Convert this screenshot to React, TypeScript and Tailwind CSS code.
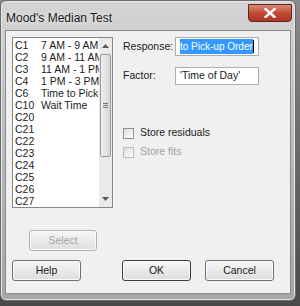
import React from "react";

const rows: [string, string][] = [
  ["C1", "7 AM - 9 AM"],
  ["C2", "9 AM - 11 AM"],
  ["C3", "11 AM - 1 PM"],
  ["C4", "1 PM - 3 PM"],
  ["C6", "Time to Pick-up Order"],
  ["C10", "Wait Time"],
  ["C20", ""],
  ["C21", ""],
  ["C22", ""],
  ["C23", ""],
  ["C24", ""],
  ["C25", ""],
  ["C26", ""],
  ["C27", ""],
];

function Btn({
  label,
  disabled,
  isDefault,
  className,
}: {
  label: string;
  disabled?: boolean;
  isDefault?: boolean;
  className?: string;
}) {
  return (
    <div
      className={
        "flex h-[21px] items-center justify-center rounded-[3px] border bg-gradient-to-b from-[#f6f6f6] to-[#dddddd] shadow-[inset_0_0_0_1px_#fbfbfb] " +
        (disabled
          ? "border-[#adb2b5] text-[#a3a3a3] "
          : isDefault
          ? "border-[#3c3c3c] text-[#1b1b1b] "
          : "border-[#707070] text-[#1b1b1b] ") +
        (className ?? "")
      }
    >
      {label}
    </div>
  );
}

function Checkbox({ label, disabled }: { label: string; disabled?: boolean }) {
  return (
    <div className="flex h-[12px] items-center gap-[6px]">
      <div
        className={
          "h-[11px] w-[11px] border bg-gradient-to-br from-[#dcdcdc] to-white " +
          (disabled ? "border-[#bcbcbc]" : "border-[#8e8f8f]")
        }
      />
      <span className={disabled ? "text-[#a0a0a0]" : "text-[#1b1b1b]"}>{label}</span>
    </div>
  );
}

function ScrollBar() {
  return (
    <div className="flex w-[13px] flex-col bg-[#eaeaea]">
      <div className="flex h-[16px] items-center justify-center">
        <svg width="7" height="4" viewBox="0 0 7 4">
          <path d="M0 4 L3.5 0 L7 4 Z" fill="#5a5a5a" />
        </svg>
      </div>
      <div className="mx-[1px] flex h-[103px] items-center justify-center rounded-[2px] border border-[#9a9a9a] bg-gradient-to-r from-[#f0f0f0] to-[#d6d6d6]">
        <div className="flex flex-col gap-[1px]">
          <div className="h-px w-[5px] bg-[#777]" />
          <div className="h-px w-[5px] bg-[#777]" />
          <div className="h-px w-[5px] bg-[#777]" />
        </div>
      </div>
      <div className="flex-1" />
      <div className="flex h-[16px] items-center justify-center">
        <svg width="7" height="4" viewBox="0 0 7 4">
          <path d="M0 0 L3.5 4 L7 0 Z" fill="#5a5a5a" />
        </svg>
      </div>
    </div>
  );
}

export default function App() {
  return (
    <div
      className="h-[306px] w-[300px] overflow-hidden bg-gradient-to-b from-[#8a8a8a] to-[#4a4a4a] text-[10.5px]"
      style={{ fontFamily: '"Liberation Sans", Arial, sans-serif' }}
    >
      {/* window frame */}
      <div className="flex h-[301px] w-[296px] flex-col rounded-[6px] border border-[#6b6b6b] bg-gradient-to-b from-[#d4d4d4] via-[#bababa] to-[#a6a6a6] shadow-[inset_0_0_0_1px_#e6e6e6]">
        {/* title bar */}
        <div className="flex h-[29px] items-start justify-between pl-[5px] pr-[3px]">
          <span className="mt-[8px] text-[12px] text-[#1a1a1a] [text-shadow:0_0_6px_#ffffff]">
            Mood's Median Test
          </span>
          <div className="mt-[3px] flex h-[18px] w-[44px] items-center justify-center rounded-b-[4px] border border-[#5a2a22] bg-gradient-to-b from-[#d98a76] via-[#c24a36] to-[#ad3624]">
            <svg width="12" height="10" viewBox="0 0 12 10">
              <path
                d="M1.5 1 L10.5 9 M10.5 1 L1.5 9"
                stroke="#ffffff"
                strokeWidth="2.4"
                strokeLinecap="square"
              />
            </svg>
          </div>
        </div>

        {/* client area */}
        <div className="mx-[4px] flex h-[264px] flex-col border border-[#8a8a8a] bg-[#f0f0f0] pl-[6px] pt-[6px]">
          <div className="flex">
            {/* column list */}
            <div className="flex h-[171px] w-[101px] border border-[#828790] bg-white">
              <div className="flex-1 overflow-hidden pl-[2px] pt-[2px] text-[#1b1b1b]">
                {rows.map(([c, name]) => (
                  <div key={c} className="flex h-[12px] items-center whitespace-nowrap">
                    <span className="w-[26px] shrink-0">{c}</span>
                    <span>{name}</span>
                  </div>
                ))}
              </div>
              <ScrollBar />
            </div>

            {/* right side */}
            <div className="ml-[10px] flex flex-col text-[#1b1b1b]">
              <div className="flex h-[19px] items-center">
                <span className="w-[52px]">Response:</span>
                <div className="flex h-[19px] w-[84px] items-center overflow-hidden border border-[#abadb3] bg-white pl-[4px]">
                  <span className="whitespace-nowrap bg-[#3399ff] text-[10px] text-white">
                    to Pick-up Order
                  </span>
                  <span className="h-[13px] w-px shrink-0 bg-black" />
                </div>
              </div>
              <div className="mt-[11px] flex h-[18px] items-center">
                <span className="w-[52px]">Factor:</span>
                <div className="flex h-[18px] w-[84px] items-center border border-[#abadb3] bg-white pl-[4px]">
                  <span className="whitespace-nowrap">'Time of Day'</span>
                </div>
              </div>
              <div className="mt-[42px] flex flex-col gap-[7px]">
                <Checkbox label="Store residuals" />
                <Checkbox label="Store fits" disabled />
              </div>
            </div>
          </div>

          <div className="mt-[22px] pl-[17px]">
            <Btn label="Select" disabled className="w-[68px]" />
          </div>

          <div className="mt-[9px] flex">
            <Btn label="Help" className="w-[69px]" />
            <Btn label="OK" isDefault className="ml-[41px] w-[69px]" />
            <Btn label="Cancel" className="ml-[14px] w-[69px]" />
          </div>
        </div>
      </div>
    </div>
  );
}
